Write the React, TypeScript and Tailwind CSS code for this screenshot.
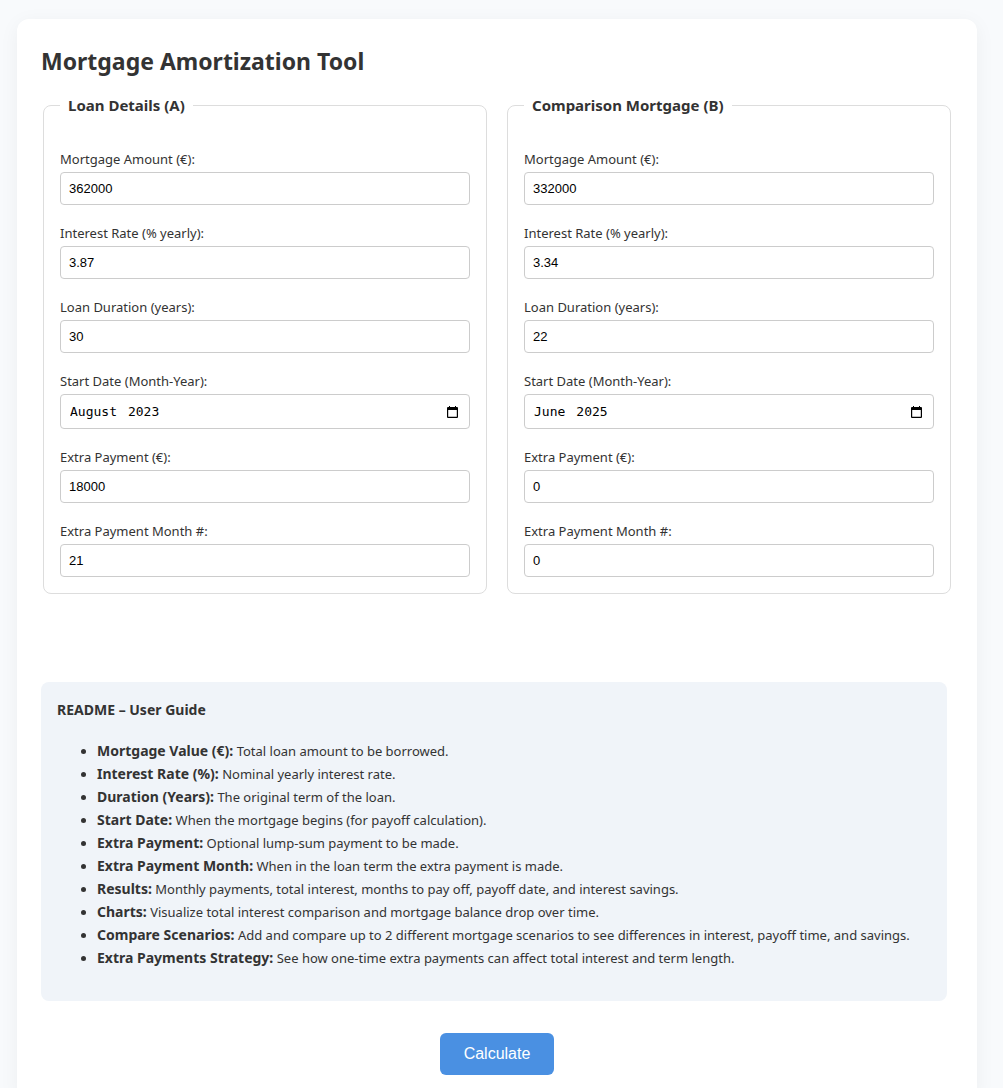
import React from 'react';

type FieldDef = { id: string; label: string; value: string; year?: string };

const loanA: FieldDef[] = [
  { id: 'amountA', label: 'Mortgage Amount (€):', value: '362000' },
  { id: 'rateA', label: 'Interest Rate (% yearly):', value: '3.87' },
  { id: 'yearsA', label: 'Loan Duration (years):', value: '30' },
  { id: 'startA', label: 'Start Date (Month-Year):', value: 'August', year: '2023' },
  { id: 'extraA', label: 'Extra Payment (€):', value: '18000' },
  { id: 'extraMonthA', label: 'Extra Payment Month #:', value: '21' },
];

const loanB: FieldDef[] = [
  { id: 'amountB', label: 'Mortgage Amount (€):', value: '332000' },
  { id: 'rateB', label: 'Interest Rate (% yearly):', value: '3.34' },
  { id: 'yearsB', label: 'Loan Duration (years):', value: '22' },
  { id: 'startB', label: 'Start Date (Month-Year):', value: 'June', year: '2025' },
  { id: 'extraB', label: 'Extra Payment (€):', value: '0' },
  { id: 'extraMonthB', label: 'Extra Payment Month #:', value: '0' },
];

const guide: [string, string][] = [
  ['Mortgage Value (€):', 'Total loan amount to be borrowed.'],
  ['Interest Rate (%):', 'Nominal yearly interest rate.'],
  ['Duration (Years):', 'The original term of the loan.'],
  ['Start Date:', 'When the mortgage begins (for payoff calculation).'],
  ['Extra Payment:', 'Optional lump-sum payment to be made.'],
  ['Extra Payment Month:', 'When in the loan term the extra payment is made.'],
  ['Results:', 'Monthly payments, total interest, months to pay off, payoff date, and interest savings.'],
  ['Charts:', 'Visualize total interest comparison and mortgage balance drop over time.'],
  ['Compare Scenarios:', 'Add and compare up to 2 different mortgage scenarios to see differences in interest, payoff time, and savings.'],
  ['Extra Payments Strategy:', 'See how one-time extra payments can affect total interest and term length.'],
];

// Month name and year as two text boxes inside one bordered box, with a picker button.
function MonthInput({ id, month, year }: { id: string; month: string; year: string }) {
  return (
    <div className="flex h-[35px] items-center gap-[11px] rounded-[4px] border border-[#cccccc] bg-white px-[9px] font-['DejaVu_Sans_Mono',monospace] text-[13px] text-black">
      <input id={id} type="text" defaultValue={month} className="field-sizing-content outline-none" />
      <input type="text" aria-label="Start year" defaultValue={year} className="field-sizing-content outline-none" />
      <button type="button" aria-label="Show month picker" className="mr-0.5 ml-auto">
        <svg width="11" height="12" viewBox="0 0 11 12" aria-hidden="true">
          <path fill="#000000" d="M1 1h1V0h1v1h5V0h1v1h1a1 1 0 0 1 1 1v9a1 1 0 0 1-1 1H1a1 1 0 0 1-1-1V2a1 1 0 0 1 1-1Zm.2 3v6.8h8.6V4Z" />
        </svg>
      </button>
    </div>
  );
}

function Field({ id, label, value, year }: FieldDef) {
  return (
    <div className="flex flex-col">
      <label htmlFor={id} className="mt-[18px] mb-0.5 text-[13px] leading-[21px]">{label}</label>
      {year ? (
        <MonthInput id={id} month={value} year={year} />
      ) : (
        <input
          id={id}
          type="number"
          step="any"
          defaultValue={value}
          className="h-[33px] w-full rounded-[4px] border border-[#cccccc] bg-white p-2 font-['Liberation_Sans',Arial,sans-serif] text-[13px] text-black"
        />
      )}
    </div>
  );
}

function LoanFields({ title, fields }: { title: string; fields: FieldDef[] }) {
  return (
    <fieldset className="min-w-0 flex-1 rounded-lg border border-[#dddddd] px-4 pt-3.5 pb-4">
      <legend className="px-2 text-[15px] leading-6 font-bold">{title}</legend>
      {fields.map((f) => <Field key={f.id} {...f} />)}
    </fieldset>
  );
}

export default function App() {
  return (
    <div className="min-h-screen bg-[#f8fafc] pt-[19px] pr-[26px] pb-4 pl-[17px] font-['Noto_Sans',sans-serif] text-[#333333]">
      <main className="mx-auto max-w-[960px] rounded-xl bg-white p-6 shadow-[0_4px_20px_rgba(0,0,0,0.05)]">
        <h1 className="mb-3.5 text-[23px] leading-9 font-bold">Mortgage Amortization Tool</h1>
        <div className="mx-0.5 flex gap-5">
          <LoanFields title="Loan Details (A)" fields={loanA} />
          <LoanFields title="Comparison Mortgage (B)" fields={loanB} />
        </div>
        <section className="mt-[88px] mr-1.5 rounded-lg bg-[#f0f4f9] p-4">
          <h2 className="text-[14px] leading-[23px] font-bold">README – User Guide</h2>
          <ul className="mt-[19px] mb-[15px] list-disc pl-10 text-[13px] leading-[23px]">
            {guide.map(([term, text]) => (
              <li key={term}><strong className="text-[14px] leading-5">{term}</strong> {text}</li>
            ))}
          </ul>
        </section>
        <button type="button" className="mx-auto mt-8 block h-[42px] rounded-md bg-[#4a90e2] px-6 font-['Liberation_Sans',Arial,sans-serif] text-[16px] text-white">
          Calculate
        </button>
      </main>
    </div>
  );
}
